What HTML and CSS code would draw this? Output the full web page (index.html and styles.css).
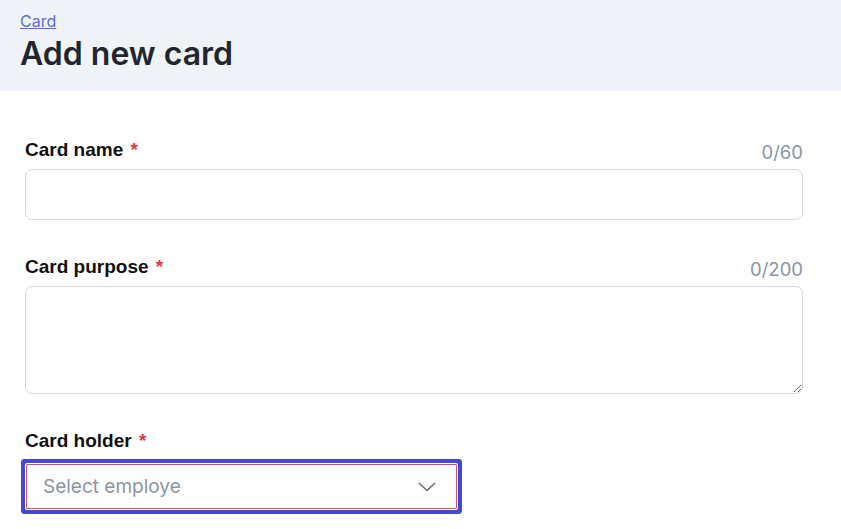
FILE: index.html
```html
<!DOCTYPE html>
<html lang="en">
<head>
    <meta charset="UTF-8">
    <meta name="viewport" content="width=device-width, initial-scale=1.0">
    <title>Add new card</title>
    <link rel="stylesheet" href="styles.css">
</head>
<body>
    <div class="page-header">
        <a href="#" class="crumb">Card</a>
        <h1>Add new card</h1>
    </div>

    <form class="card-form">
        <div class="form-field">
            <div class="field-top">
                <label for="card-name">Card name <span class="req">*</span></label>
                <span class="counter">0/60</span>
            </div>
            <input type="text" id="card-name" class="text-input">
        </div>

        <div class="form-field">
            <div class="field-top">
                <label for="card-purpose">Card purpose <span class="req">*</span></label>
                <span class="counter">0/200</span>
            </div>
            <textarea id="card-purpose" class="text-area"></textarea>
        </div>

        <div class="form-field">
            <div class="field-top">
                <label>Card holder <span class="req">*</span></label>
            </div>
            <div class="select-box">
                <span class="placeholder">Select employe</span>
                <svg class="chevron" width="18" height="10" viewBox="0 0 18 10">
                    <path d="M1.5 1.5 L9 8.5 L16.5 1.5" fill="none" stroke="#6b7280" stroke-width="1.7" stroke-linecap="round" stroke-linejoin="round"/>
                </svg>
            </div>
        </div>
    </form>
</body>
</html>
```

FILE: styles.css
```css
body {
    margin: 0;
    padding: 0;
    background-color: #fff;
    font-family: Inter, "Noto Sans", sans-serif;
    color: #111;
}

.page-header {
    background-color: #f0f3f8;
    padding: 12px 20px 0;
    height: 79px;
}

.crumb {
    display: block;
    font-size: 16px;
    line-height: 19px;
    color: #5a69e0;
    text-decoration: underline;
}

.page-header h1 {
    margin: 4px 0 0;
    font-size: 32px;
    line-height: 38px;
    font-weight: 600;
    color: #1f2630;
}

.card-form {
    padding: 47px 38px 0 25px;
}

.form-field {
    margin-bottom: 35px;
}

.field-top {
    display: flex;
    justify-content: space-between;
    align-items: center;
    height: 24px;
    margin-bottom: 7px;
}

.field-top label {
    font-family: "Liberation Sans", Arial, sans-serif;
    font-size: 19px;
    font-weight: bold;
    color: #111;
}

.req {
    color: #e0393e;
    margin-left: 2px;
}

.counter {
    font-size: 18.5px;
    color: #8b95a5;
    margin-top: 4px;
}

.text-input {
    display: block;
    width: 100%;
    height: 51px;
    box-sizing: border-box;
    border: 1px solid #d3d7de;
    border-radius: 7px;
    font-family: inherit;
    font-size: 18px;
    padding: 0 16px;
}

.text-area {
    display: block;
    width: 100%;
    height: 108px;
    box-sizing: border-box;
    margin-top: 1px;
    border: 1px solid #d3d7de;
    border-radius: 7px;
    font-family: inherit;
    font-size: 18px;
    padding: 12px 16px;
    resize: vertical;
}

.select-box {
    display: flex;
    align-items: center;
    justify-content: space-between;
    width: 431px;
    height: 45px;
    box-sizing: border-box;
    margin: 11px 0 0 1px;
    padding: 0 20px 0 16px;
    border: 1px solid #db4d6c;
    box-shadow: 0 0 0 1px #fff, 0 0 0 5px #4648d0;
    border-radius: 1px;
    background: #fff;
}

.placeholder {
    font-size: 19px;
    color: #8b95a5;
}

.chevron {
    display: block;
}
```
